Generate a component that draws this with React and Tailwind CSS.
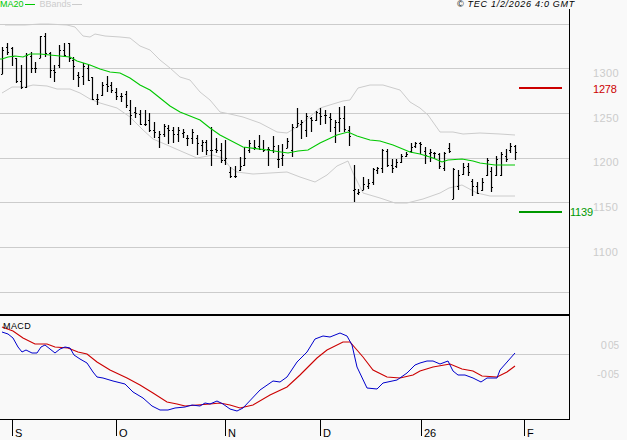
import React from 'react';

// [high, low, open, close] in page pixels
const bars = [
  [47,74,74,50],[43,55,47,52],[47,66,48,56],[58,83,58,81],[65,89,81,87],[53,88,87,55],[52,73,56,68],[62,73,68,68],
  [36,58,58,36],[33,57,36,53],[52,78,53,70],[65,82,70,72],[45,68,65,50],[43,57,50,55],[43,62,43,58],[57,80,60,66],
  [72,87,75,77],[63,85,76,66],[65,81,68,80],[77,100,77,99],[94,105,99,99],[82,96,95,85],[76,92,84,86],[82,93,85,90],
  [88,100,92,96],[93,102,96,96],[91,108,94,105],[100,125,110,115],[107,118,112,113],[110,125,114,124],[110,126,124,124],[113,132,120,130],
  [122,138,130,132],[131,148,137,134],[124,137,134,126],[125,144,128,130],[127,143,130,134],[127,142,134,130],[129,138,133,132],[135,146,138,138],
  [129,144,138,132],[135,155,138,143],[140,152,145,142],[140,155,142,150],[127,166,150,150],[138,153,149,150],[143,163,150,160],[140,165,160,158],
  [167,178,172,176],[166,178,176,176],[157,171,170,166],[147,166,165,158],[140,153,150,143],[140,150,148,147],[135,150,146,149],[140,152,149,150],
  [147,166,149,149],[136,153,150,146],[145,168,159,159],[144,166,158,155],[138,148,148,141],[124,157,150,127],[108,127,127,123],[120,139,124,122],
  [113,137,130,116],[117,132,118,120],[111,121,120,112],[108,125,113,116],[110,124,115,115],[113,132,117,119],[120,143,127,122],[107,132,122,118],
  [106,132,118,129],[126,146,130,136],[165,202,190,189],[189,195,193,192],[177,190,190,184],[179,189,186,183],[168,185,182,169],[167,174,170,168],
  [149,173,168,150],[149,167,151,165],[159,173,165,168],[159,168,166,162],[154,163,162,156],[152,157,156,154],[143,153,151,147],[142,148,146,143],
  [142,154,143,144],[147,164,151,155],[149,162,153,152],[152,159,153,153],[153,169,154,166],[152,171,168,153],[143,153,148,151],[168,199,199,169],
  [170,190,186,175],[163,175,174,167],[163,176,166,172],[179,196,181,186],[182,194,186,193],[178,191,190,182],[158,176,175,160],[167,192,171,187],
  [156,176,175,159],[152,176,175,154],[149,162,156,159],[143,153,150,146],[145,160,146,152],
];

const pts = (list) => list.map((p) => p.join(',')).join(' ');

const ma20 = [[0,59],[2,59],[8,57],[15,56],[23,57],[30,54],[40,54],[50,55],[60,56],[70,57],[77,61],[90,65],[100,69],[110,72],[120,73],[130,78],[140,85],[150,90],[160,98],[170,106],[180,112],[190,116],[200,120],[210,128],[220,135],[243,147],[267,150],[288,153],[298,151],[308,150],[320,143],[337,135],[348,132],[357,136],[370,140],[380,141],[393,145],[410,152],[420,154],[433,158],[442,162],[448,160],[462,159],[473,161],[480,163],[495,165],[515,165]];
const upper = [[5,25],[15,25],[25,25],[40,24],[48,24],[67,25],[75,27],[83,36],[90,37],[95,34],[105,36],[120,37],[130,38],[140,46],[150,50],[160,60],[170,68],[180,77],[190,80],[200,92],[210,100],[220,112],[230,114],[243,117],[260,123],[277,132],[287,133],[300,125],[320,108],[333,104],[343,101],[350,100],[358,88],[370,85],[383,85],[400,90],[410,102],[420,108],[428,115],[440,132],[453,132],[463,134],[480,133],[500,134],[515,135]];
const lower = [[2,93],[12,87],[25,87],[33,85],[47,86],[57,89],[70,89],[80,93],[90,99],[100,103],[117,108],[130,117],[143,130],[153,139],[167,145],[183,152],[197,158],[213,155],[223,158],[230,167],[237,172],[253,174],[270,173],[287,172],[300,177],[315,182],[327,175],[337,166],[348,161],[353,173],[363,193],[380,198],[395,203],[407,203],[423,199],[440,193],[449,188],[462,185],[477,193],[490,196],[515,196]];
const macd = [[2,332],[8,334],[13,338],[18,347],[22,352],[26,350],[32,353],[37,353],[41,347],[45,345],[50,349],[55,353],[60,349],[65,347],[70,348],[74,355],[80,359],[87,363],[93,372],[97,377],[103,378],[113,381],[125,384],[133,392],[143,398],[152,406],[160,410],[168,410],[175,408],[185,407],[192,405],[200,406],[205,403],[210,404],[217,401],[223,404],[230,409],[237,411],[243,408],[260,390],[273,381],[280,382],[287,377],[297,362],[307,352],[315,339],[323,336],[330,337],[340,333],[347,336],[352,345],[357,367],[367,388],[377,389],[383,383],[397,380],[407,373],[415,365],[420,363],[427,361],[433,361],[440,364],[448,361],[453,371],[458,375],[465,375],[473,378],[481,382],[487,378],[497,378],[500,370],[515,353]];
const signal = [[2,327],[13,331],[23,338],[35,344],[47,344],[55,347],[68,348],[78,352],[87,354],[97,362],[110,370],[127,378],[140,385],[153,393],[167,402],[177,404],[185,406],[210,404],[220,403],[230,405],[240,408],[253,405],[270,395],[287,387],[300,375],[317,358],[327,350],[343,342],[350,342],[363,357],[373,370],[387,377],[400,378],[413,375],[420,371],[433,367],[450,364],[462,369],[473,371],[482,376],[497,377],[507,372],[515,366]];

const gridLines = [24, 68, 113, 158, 202, 247, 292];
const priceLabels = ['1300', '1250', '1200', '1150', '1100'];
const dateTicks = [
  { label: 'S', width: 'w-[104px]' },
  { label: 'O', width: 'w-[109px]' },
  { label: 'N', width: 'w-[95px]' },
  { label: 'D', width: 'w-[101px]' },
  { label: '26', width: 'w-[103px]' },
  { label: 'F', width: 'w-[30px]' },
];

function PriceChart() {
  return (
    <svg viewBox="0 9 569 305" className="block w-[569px] h-[305px]">
      {gridLines.map((y) => (
        <line key={y} x1="0" x2="569" y1={y + 0.5} y2={y + 0.5} stroke="#cccccc" strokeWidth="1" />
      ))}
      <polyline points={pts(upper)} fill="none" stroke="#cccccc" strokeWidth="1" />
      <polyline points={pts(lower)} fill="none" stroke="#cccccc" strokeWidth="1" />
      {bars.map(([hi, lo, open, close], i) => {
        const x = Math.round(2 + i * 4.75) + 0.5;
        return (
          <g key={i} stroke="#000000">
            <line x1={x} x2={x} y1={hi} y2={lo} strokeWidth="1.2" />
            <line x1={x - 1.5} x2={x} y1={open + 0.5} y2={open + 0.5} strokeWidth="1" />
            <line x1={x} x2={x + 1.5} y1={close + 0.5} y2={close + 0.5} strokeWidth="1" />
          </g>
        );
      })}
      <polyline points={pts(ma20)} fill="none" stroke="#00c800" strokeWidth="1.1" />
      <rect x="519" y="87" width="43" height="2" fill="#cc0000" />
      <rect x="519" y="211" width="43" height="2" fill="#009900" />
    </svg>
  );
}

function MacdChart() {
  return (
    <svg viewBox="0 316 569 103" className="block w-[569px] h-[103px]">
      <line x1="0" x2="569" y1="354.5" y2="354.5" stroke="#cccccc" strokeWidth="1" />
      <polyline points={pts(signal)} fill="none" stroke="#cc0000" strokeWidth="1.1" />
      <polyline points={pts(macd)} fill="none" stroke="#0000cc" strokeWidth="1" />
    </svg>
  );
}

export default function App() {
  return (
    <div className="w-[627px] h-[440px] overflow-hidden flex flex-col bg-[#f9f9f9] font-['Liberation_Sans',sans-serif]">
      <div className="h-[9px] flex items-center justify-between text-[9px] leading-[9px]">
        <div className="flex items-center">
          <span className="text-[#00c800]">MA20</span>
          <span className="w-[10px] h-px ml-px mr-[5px] bg-[#00c800]" />
          <span className="text-[#cccccc]">BBands</span>
          <span className="w-[10px] h-px ml-px bg-[#cccccc]" />
        </div>
        <span className="mr-[52px] italic text-black tracking-[0.72px]">© TEC 1/2/2026 4:0 GMT</span>
      </div>

      <div className="flex">
        <div className="w-[570px] border-r border-black">
          <div className="relative border-b-2 border-black">
            <PriceChart />
            <span className="absolute left-[3px] top-[313px] text-[9px] leading-[9px] tracking-[0.4px] text-black">MACD</span>
          </div>
          <div className="border-b border-black">
            <MacdChart />
          </div>
        </div>

        <div className="relative flex-1 text-[11px] leading-[12px]">
          <div className="pt-[58px] pl-[23px] flex flex-col text-[#cccccc] tracking-[0.4px]">
            {priceLabels.map((label) => (
              <div key={label} className="h-[44.7px]">{label}</div>
            ))}
          </div>
          <span className="absolute left-[23px] top-[74px] text-[#cc0000] tracking-[-0.2px]">1278</span>
          <span className="absolute left-0 top-[197px] text-[#009900] tracking-[-0.2px]">1139</span>
          <div className="absolute right-[8px] top-[330px] text-[#cccccc] text-right">
            0<span className="ml-px text-[10px]">05</span>
          </div>
          <div className="absolute right-[8px] top-[359px] text-[#cccccc] text-right">
            -0<span className="ml-px text-[10px]">05</span>
          </div>
        </div>
      </div>

      <div className="flex pl-[12px]">
        {dateTicks.map((tick) => (
          <div key={tick.label} className={`${tick.width} h-[16px] border-l border-black`}>
            <span className="block pl-[2px] pt-[8px] text-[11px] leading-[11px] text-black whitespace-nowrap">{tick.label}</span>
          </div>
        ))}
      </div>
    </div>
  );
}
